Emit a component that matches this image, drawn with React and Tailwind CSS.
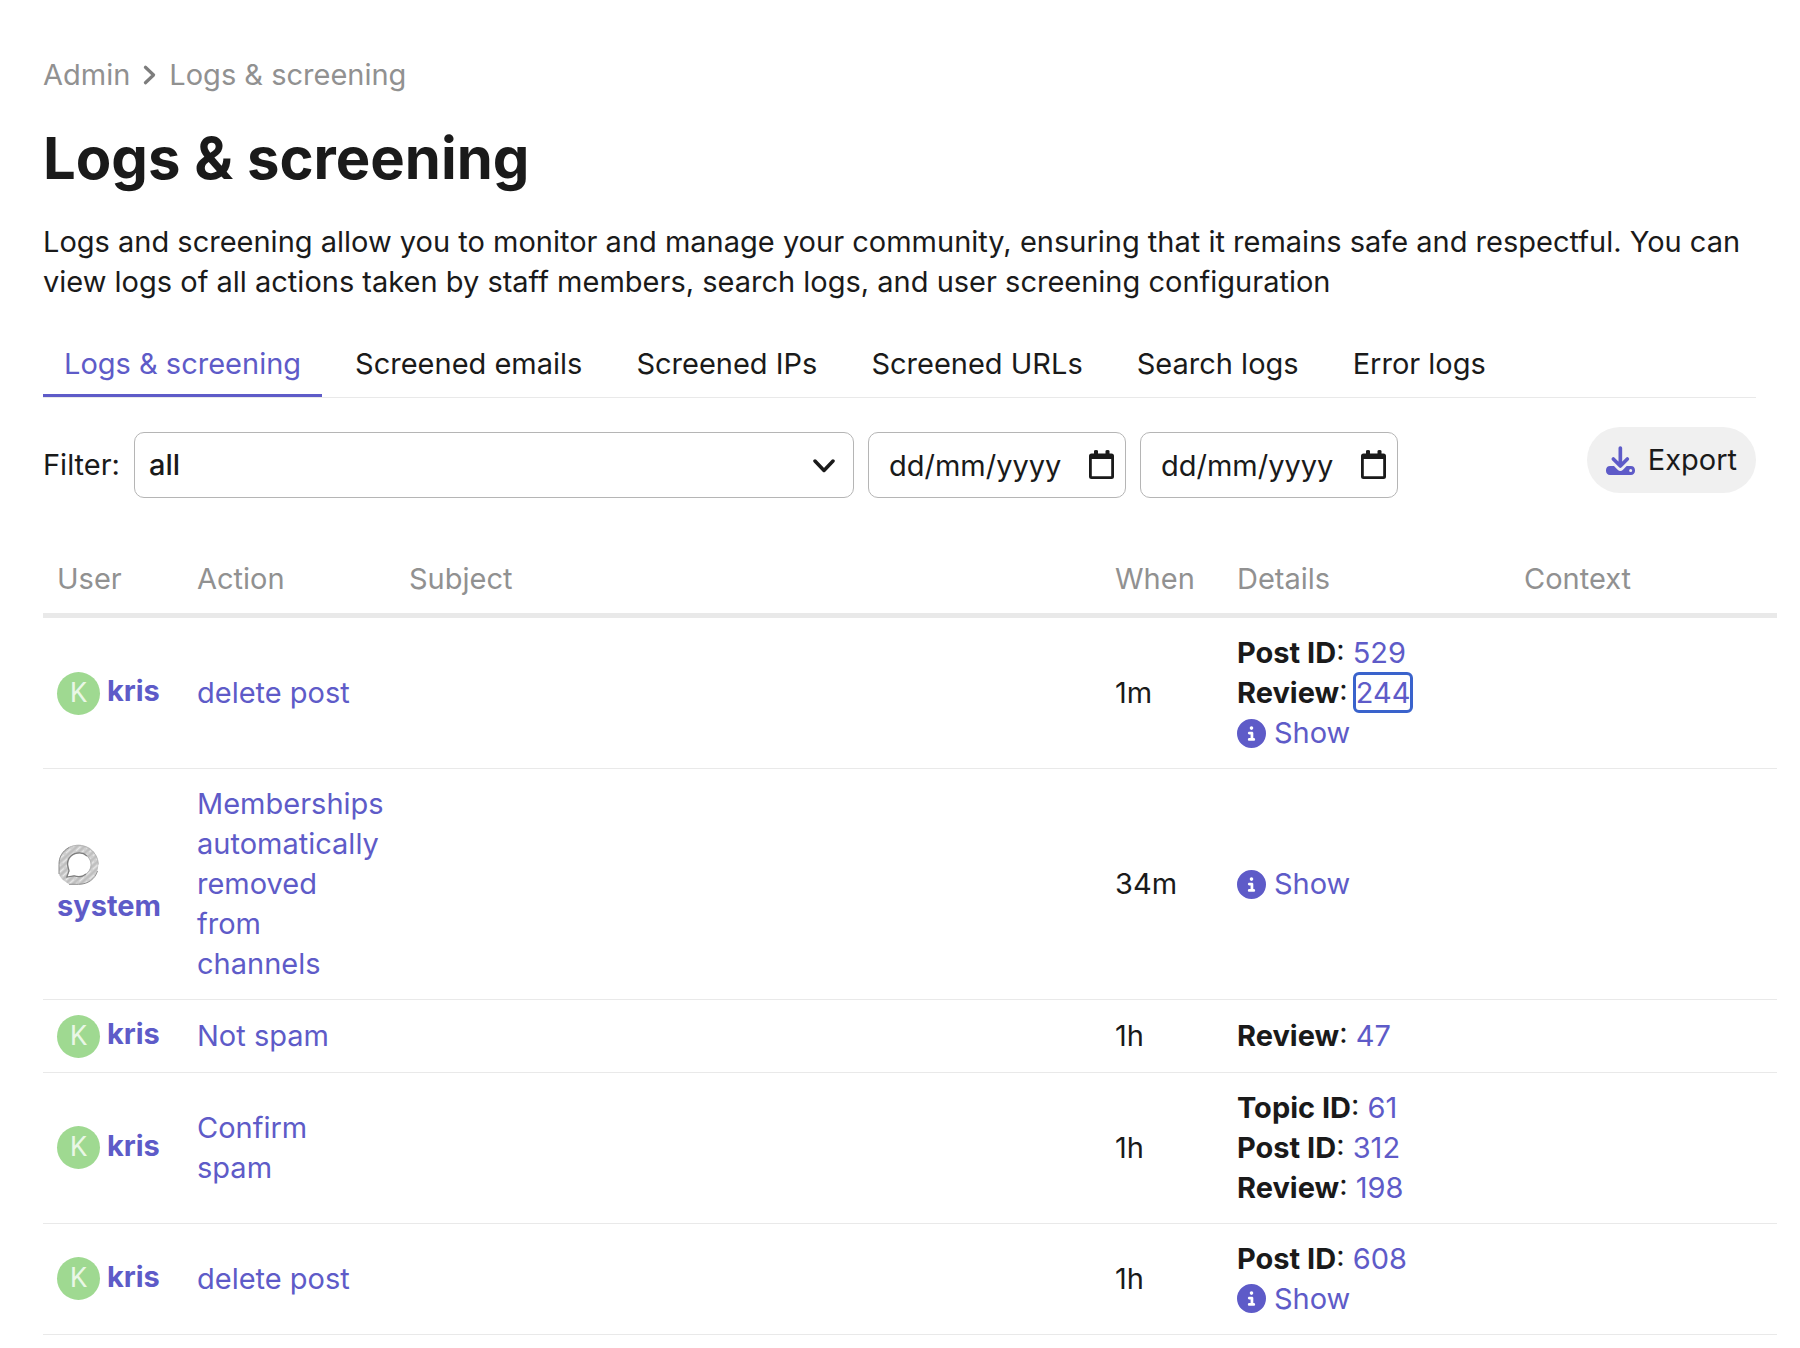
import React from 'react';
import { FaCircleInfo } from 'react-icons/fa6';

const tabs = ['Logs & screening', 'Screened emails', 'Screened IPs', 'Screened URLs', 'Search logs', 'Error logs'];

const logs = [
    { user: 'kris', action: 'delete post', when: '1m', ids: [['Post ID', '529'], ['Review', '244', true]], show: true },
    { user: 'system', action: 'Memberships automatically removed from channels', when: '34m', ids: [], show: true },
    { user: 'kris', action: 'Not spam', when: '1h', ids: [['Review', '47']] },
    { user: 'kris', action: 'Confirm spam', when: '1h', ids: [['Topic ID', '61'], ['Post ID', '312'], ['Review', '198']] },
    { user: 'kris', action: 'delete post', when: '1h', ids: [['Post ID', '608']], show: true },
];

// Hand-sketched speech bubble ring
const SystemAvatar = () => (
    <svg viewBox="0 0 43 43" className="inline-block align-middle size-[43px]" aria-hidden="true">
        <defs>
            <pattern id="hatch" width="9" height="5" patternUnits="userSpaceOnUse" patternTransform="rotate(-42)">
                <rect width="9" height="5" fill="#cfcfcf" />
                <path d="M0 1h9" stroke="#b0b0b0" strokeWidth="1" />
                <path d="M0 3.500h6" stroke="#e8e8e8" strokeWidth="1" />
            </pattern>
        </defs>
        <path
            fillRule="evenodd"
            fill="url(#hatch)"
            d="M21.500 1.800C33 1.800 41.300 10.500 41.300 21.500S33 41.300 21.500 41.300H12C7 38 3 35 2 31V21.500C2 10.500 10.500 1.800 21.500 1.800ZM22.500 10.500C16 10.500 11.500 15 11.500 21C11.500 24 12.500 26 12.500 28L9.800 34L17 32.500C26 35.500 33.500 29.500 33.500 21.500C33.500 15 29 10.500 22.500 10.500Z"
        />
        <path
            fill="none"
            stroke="#8c8c8c"
            strokeWidth="1"
            d="M12 4.500C5 8.500 2 14 2 21.500V31M12 41.300H21.500C31 41.300 38 36 40.500 28"
        />
        <path
            fill="none"
            stroke="#7d7d7d"
            strokeWidth="1.2"
            d="M30 13C27.500 10.500 25 9.800 22.500 9.800C15.500 9.800 10.500 14.500 10.500 21C10.500 24 11.800 26 12 28L9.800 34L17 32.800C22 34.500 26 33.500 29 31"
        />
        <path fill="none" stroke="#b5b5b5" strokeWidth="1" d="M30 13C36 18 35.500 27 29 31M12 4.500C25 -2 41 7 41.300 21.500" />
    </svg>
);

const Avatar = ({ user }) =>
    user === 'system' ? (
        <SystemAvatar />
    ) : (
        <span className="inline-flex items-center justify-center align-middle size-[43px] rounded-full bg-[#9fd991] font-['Roboto',sans-serif] font-normal text-[27px] leading-none text-[#e9f7e6]">
            K
        </span>
    );

const DownloadIcon = () => (
    <svg viewBox="0 0 87 87" className="size-[29px]" aria-hidden="true">
        <path
            fill="#5e5bc8"
            fillRule="evenodd"
            d="M12 60H24L35 71C40 76 46 76 51 71L62 60H75C82 60 87 65 87 72V75C87 82 82 87 75 87H12C5 87 0 82 0 75V72C0 65 5 60 12 60ZM74 69A4.500 4.500 0 1 0 74 78A4.500 4.500 0 1 0 74 69Z"
        />
        <path d="M43 6V58M22 39L43 60L64 39" fill="none" stroke="#5e5bc8" strokeWidth="11" strokeLinecap="round" strokeLinejoin="round" />
    </svg>
);

const DateInput = ({ label }) => (
    <div className="relative w-[258px]">
        <input
            type="text"
            aria-label={label}
            placeholder="dd/mm/yyyy"
            className="w-full h-[66px] pl-5 pr-12 rounded-[10px] border border-[#b5b5b5] bg-white placeholder:text-[#1a1a1a] placeholder:opacity-100"
        />
        <svg viewBox="0 0 25 29" className="absolute right-[12px] top-[18px] w-[25px] h-[29px] pointer-events-none" aria-hidden="true">
            <path
                fill="#1a1a1a"
                fillRule="evenodd"
                d="M5 1Q5 0 7 0T9 1V3.500H16.500V1Q16.500 0 18.500 0T20.500 1V3.500H22.500Q25 3.500 25 6V26.500Q25 29 22.500 29H2.500Q0 29 0 26.500V6Q0 3.500 2.500 3.500H5ZM2.800 9V26.300H22.200V9Z"
            />
        </svg>
    </div>
);

const App = () => {
    return (
        <main className="min-h-screen overflow-x-hidden bg-white pl-[43px] pr-[44px] pt-[55px] font-['Inter',sans-serif] text-[29px] leading-[40px] text-[#1a1a1a]">
            <nav aria-label="Breadcrumb" className="flex items-center text-[#919191]">
                <a href="#admin">Admin</a>
                <svg viewBox="0 0 14 22" className="mx-[13px] h-[20px] w-[13px]" fill="none" stroke="#7d7d7d" strokeWidth="3.500" strokeLinecap="round" strokeLinejoin="round">
                    <path d="M2.500 2.500L11.500 11L2.500 19.500" />
                </svg>
                <a href="#logs">Logs &amp; screening</a>
            </nav>

            <h1 className="mt-[28px] text-[58px] leading-[70px] font-bold">Logs &amp; screening</h1>
            <p className="mt-[29px]">
                Logs and screening allow you to monitor and manage your community, ensuring that it remains safe and
                respectful. You can view logs of all actions taken by staff members, search logs, and user screening
                configuration
            </p>

            <ul className="mt-[36px] flex gap-[12px] border-b border-[#e9e9e9]">
                {tabs.map((tab, i) => (
                    <li key={tab}>
                        <a
                            href="#tab"
                            className={
                                i === 0
                                    ? 'block px-[21px] pt-[6px] pb-[10px] border-b-3 border-[#5e5bc8] text-[#5e5bc8]'
                                    : 'block px-[21px] pt-[6px] pb-[10px] border-b-3 border-transparent'
                            }
                        >
                            {tab}
                        </a>
                    </li>
                ))}
            </ul>

            <div className="mt-[29px] flex items-start justify-between">
                <div className="mt-[5px] flex items-center gap-[14px]">
                    <label htmlFor="filter">Filter:</label>
                    <div className="relative w-[720px]">
                        <select
                            id="filter"
                            className="appearance-none w-full h-[66px] px-[14px] rounded-[10px] border border-[#b5b5b5] bg-white font-medium"
                        >
                            <option>all</option>
                        </select>
                        <svg viewBox="0 0 22 14" className="absolute right-[19px] top-[27px] w-[22px] h-[14px] pointer-events-none" fill="none" stroke="#1a1a1a" strokeWidth="3.500" strokeLinecap="round" strokeLinejoin="round">
                            <path d="M2 2L11 11.500L20 2" />
                        </svg>
                    </div>
                    <DateInput label="Start date" />
                    <DateInput label="End date" />
                </div>
                <button className="flex items-center gap-[13px] h-[66px] px-[19px] rounded-full bg-[#f0f0f0]">
                    <DownloadIcon />
                    Export
                </button>
            </div>

            <div className="mt-[47px] -mr-[21px]">
                <table className="w-full table-fixed border-collapse text-left">
                    <colgroup>
                        <col className="w-[140px]" />
                        <col className="w-[212px]" />
                        <col />
                        <col className="w-[122px]" />
                        <col className="w-[287px]" />
                        <col className="w-[267px]" />
                    </colgroup>
                    <thead>
                        <tr className="border-b-5 border-[#e9e9e9] text-[#919191]">
                            {['User', 'Action', 'Subject', 'When', 'Details', 'Context'].map((name) => (
                                <th key={name} className="px-[14px] py-[14px] font-normal">{name}</th>
                            ))}
                        </tr>
                    </thead>
                    <tbody>
                        {logs.map((log, i) => (
                            <tr key={i} className="border-b border-[#e9e9e9]">
                                <td className="pl-[14px] py-[14px] font-bold text-[#5e5bc8]">
                                    <a href="#user"><Avatar user={log.user} /> {log.user}</a>
                                </td>
                                <td className="px-[14px] py-[15px] text-[#5e5bc8]">
                                    <a href="#action">{log.action}</a>
                                </td>
                                <td />
                                <td className="px-[14px] py-[15px]">{log.when}</td>
                                <td className="px-[14px] py-[15px]">
                                    {log.ids.map(([name, id, focused]) => (
                                        <div key={name}>
                                            <b>{name}</b>:{' '}
                                            <a
                                                href="#id"
                                                className={
                                                    focused
                                                        ? 'text-[#5e5bc8] rounded-[3px] outline-3 outline-[#3a63cc]'
                                                        : 'text-[#5e5bc8]'
                                                }
                                            >
                                                {id}
                                            </a>
                                        </div>
                                    ))}
                                    {log.show && (
                                        <a href="#show" className="flex items-center gap-[8px] text-[#5e5bc8]">
                                            <FaCircleInfo className="size-[29px]" />
                                            Show
                                        </a>
                                    )}
                                </td>
                                <td />
                            </tr>
                        ))}
                    </tbody>
                </table>
            </div>
        </main>
    );
};

export default App;
